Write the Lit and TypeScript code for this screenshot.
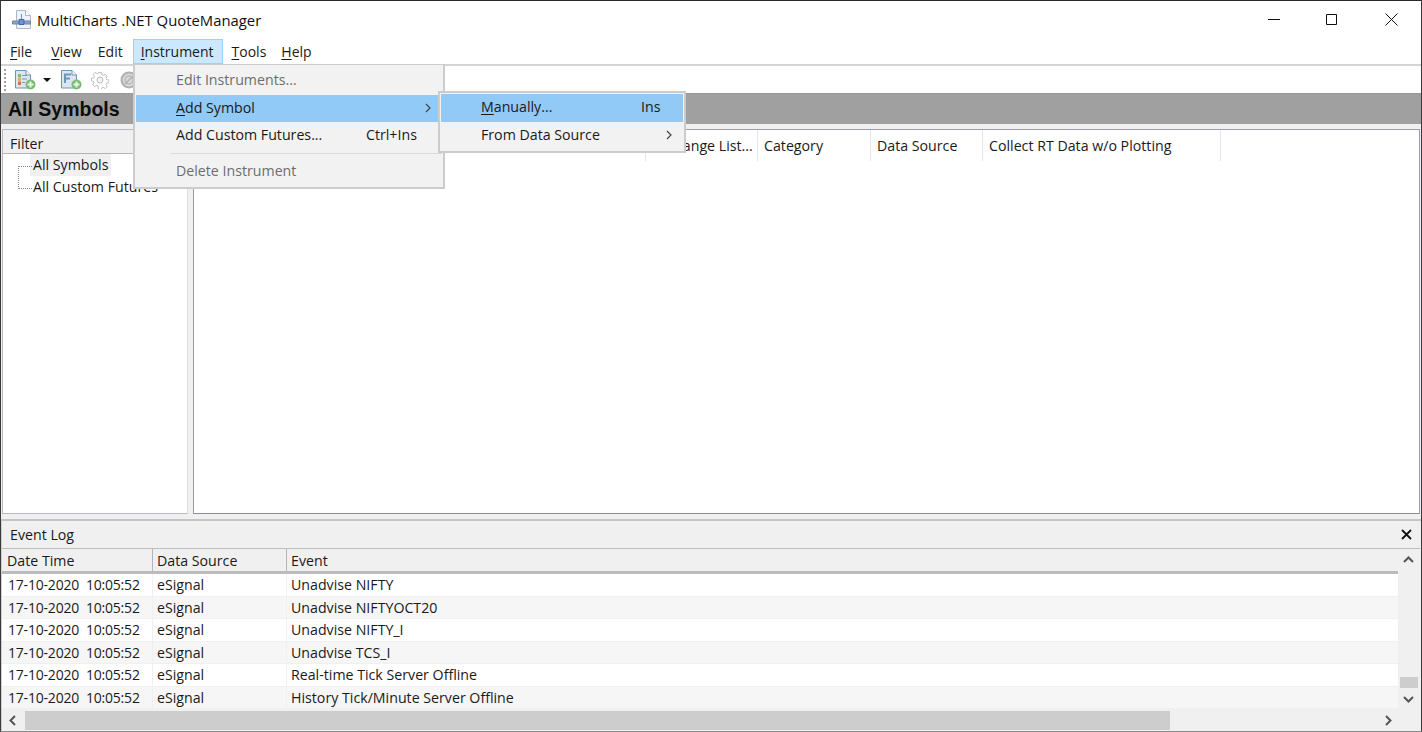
import { LitElement, html, css, svg } from "lit";
import { customElement } from "lit/decorators.js";

const rows = [
  "Unadvise NIFTY",
  "Unadvise NIFTYOCT20",
  "Unadvise NIFTY_I",
  "Unadvise TCS_I",
  "Real-time Tick Server Offline",
  "History Tick/Minute Server Offline",
];

const docIcon = (kind: string) => svg`<svg class="doc" viewBox="0 0 21 20">
  <path d="M.5.500h10.500l4.500 4.500v13H.5z" fill="#dce6f2" stroke="#6f93b8"/>
  <path d="M11 .5v4.500h4.500" fill="#f7fafd" stroke="#6f93b8"/>
  ${kind === "a"
    ? svg`<path d="M3 4h3v3.500H3z" fill="#8fb47a"/><path d="M3 8h3v3H3z" fill="#d8b25c"/><path d="M3 11.500h3V15H3z" fill="#c9735c"/><path d="M7 5.500h5M7 9h5M7 12.500h3" stroke="#7d95ae"/>`
    : svg`<path d="M4 13V4.500h6M4 8.500h5" fill="none" stroke="#6f93b8" stroke-width="2"/>`}
  <circle cx="15.500" cy="14.500" r="5" fill="#79bb72"/>
  <path d="M15.500 11.500v6M12.500 14.500h6" stroke="#eaf7e6" stroke-width="2"/>
</svg>`;

@customElement("app-root")
export class AppRoot extends LitElement {
  static styles = css`
    :host { display: block; width: 1422px; height: 732px; overflow: hidden; }
    * { box-sizing: border-box; }
    .win { position: relative; width: 1422px; height: 732px; background: #fff; display: flex; flex-direction: column;
      border-top: 1px solid #2a2a2a; border-left: 1px solid #3a3a3a; border-right: 1px solid #3a3a3a; border-bottom: 1px solid #8a8a8a;
      font-family: "Open Sans", "Noto Sans", sans-serif; font-size: 14.2px; color: #1a1a1a; overflow: hidden; }
    u { text-underline-offset: 2px; text-decoration-thickness: 1px; }

    .title { height: 38px; flex: none; display: flex; align-items: center; padding: 0 0 0 11px; background: #fff; }
    .title-icon { width: 20px; height: 20px; margin-right: 5px; flex: none; }
    .title-text { font-size: 14.85px; color: #111; flex: 1; }
    .caps { display: flex; margin-top: -2px; }
    .cap { width: 58.5px; height: 38px; display: flex; align-items: center; justify-content: center; }
    .cap.max { padding-right: 3px; }

    .menubar { height: 25px; flex: none; display: flex; align-items: stretch; background: #fff; font-size: 14px; }
    .mi { padding: 0 9px 0 8px; display: flex; align-items: center; border: 1px solid transparent; height: 25px; }
    .mi.hot { background: #cce8ff; border-color: #99d1ff; padding: 0 8px 0 7px; }
    .mi.edit { margin-left: -3px; }
    .mi.help { margin-left: -4px; }

    .toolbar { height: 29px; flex: none; border-top: 2px solid #d4d4d4; display: flex; align-items: center; padding-left: 3px; background: #fff; }
    .grip { width: 3px; height: 22px; margin-right: 8px; border-left: 2px dotted #a0a0a0; }
    .doc { width: 21px; height: 20px; flex: none; margin-top: 1px; }
    .drop { width: 0; height: 0; border-left: 4px solid transparent; border-right: 4px solid transparent; border-top: 4px solid #111; margin: 0 10px 0 7px; }
    .gear { width: 18px; height: 18px; margin-left: 9px; flex: none; }
    .ban { width: 18px; height: 18px; margin-left: 11px; flex: none; }

    .head { height: 31px; flex: none; background: #a0a0a0; border-top: 1px solid #969696; padding: 1px 0 0 7px; font: bold 19.5px "Liberation Sans", Arial, sans-serif; color: #0c0c0c; display: flex; align-items: center; }

    .body { flex: 1; min-height: 0; display: flex; flex-direction: column; background: #f0f0f0; padding-top: 5px; }
    .top { height: 385px; flex: none; display: flex; gap: 5px; padding: 0 1px; }
    .side { width: 186px; flex: none; background: #fff; border: 1px solid #b8b8c0; border-right-color: #ddd; }
    .side-h { height: 24px; background: #f0f0f0; border-bottom: 1px solid #b4b4b4; padding: 3px 0 0 7px; display: flex; align-items: center; }
    .tree { position: relative; padding: 0 0 0 30px; }
    .node { display: flex; align-items: center; height: 22px; }
    .node span { line-height: 22px; }
    .node.sel span { background: #f0f0f0; padding: 0 3px; margin-left: -3px; }
    .tree-lines { position: absolute; left: 15px; top: 12px; width: 14px; height: 23px; border-left: 1px dotted #888; border-bottom: 1px dotted #888; border-top: 1px dotted #888; }

    .list { flex: 1; background: #fff; border: 1px solid #9c9ca8; border-bottom-color: #8d8d99; }
    .list-h { display: flex; height: 31px; }
    .col { border-right: 1px solid #e5e5e5; padding: 0 0 0 6px; display: flex; align-items: center; white-space: nowrap; overflow: hidden; }

    .log { flex: 1; margin-top: 5px; min-height: 0; border-top: 2px solid #c4c4c4; border-left: 1px solid #cfcfcf; background: #f0f0f0; display: flex; flex-direction: column; position: relative; }
    .log-h { height: 28px; flex: none; display: flex; align-items: center; padding: 0 8px; border-bottom: 1px solid #bdbdbd; margin-right: 1px; }
    .log-h .lbl { flex: 1; }
    .log-mid { flex: 1; min-height: 0; display: flex; }
    .grid { flex: 1; min-width: 0; }
    .g-head { height: 25px; display: grid; grid-template-columns: 151px 134px 1fr; border-bottom: 3px solid #bcbcbc; background: #f0f0f0; }
    .g-head div { padding-left: 4px; display: flex; align-items: center; border-right: 1px solid #b4b4b4; }
    .g-head div:first-child { padding-left: 5px; }
    .g-head div:last-child { border-right: 0; }
    .g-row { height: 22.500px; display: grid; grid-template-columns: 151px 134px 1fr; background: #fff; border-bottom: 1px solid #f0f0f0; align-items: center; }
    .g-row:nth-child(odd) { background: #f6f6f6; }
    .g-row div { padding-left: 4px; height: 100%; display: flex; align-items: center; white-space: pre; border-right: 1px solid #f0f0f0; }
    .g-row div:last-child { border-right: 0; }
    .g-row .dt { padding-left: 6px; font-size: 14px; letter-spacing: -0.2px; }
    .vsb { width: 21px; flex: none; background: #f0f0f0; display: flex; flex-direction: column; align-items: center; margin-right: 2px; }
    .vsb .arrow { width: 19px; height: 22px; }
    .vsb .track { flex: 1; width: 19px; display: flex; flex-direction: column; justify-content: flex-end; }
    .vthumb { width: 18px; height: 11px; background: #cdcdcd; margin: 0 auto; }
    .arrow { flex: none; display: flex; align-items: center; justify-content: center; }
    .hsb { height: 21px; flex: none; display: flex; align-items: center; background: #f0f0f0; padding: 0 22px 1px 0; }
    .hsb .arrow { width: 22px; height: 19px; }
    .hthumb { height: 19px; width: 1145px; background: #cdcdcd; flex: none; margin-left: 1px; }
    .hsb .sp { flex: 1; }

    .menu { position: absolute; background: #f2f2f2; border: 2px solid #cccccc; padding: 1px; z-index: 2; }
    .menu.m1 { left: 132px; top: 63px; width: 312px; height: 125px; border-width: 1px 2px 2px 2px; padding-top: 2px; }
    .menu.m2 { left: 437px; top: 90px; width: 248px; height: 62px; }
    .it { display: flex; align-items: center; height: 27.500px; position: relative; padding-bottom: 2px; }
    .it.hot { background: #91c9f7; }
    .it.dis { color: #6d6d6d; }
    .m1 .t, .m2 .t { margin-left: 40px; flex: none; }
    .it .k, .it .a { position: absolute; }
    .m1 .k { left: 230px; }
    .m1 .a { left: 288px; }
    .m2 .k { left: 200px; }
    .m2 .a { left: 224px; }
    .sep { height: 1px; background: #d8d8d8; margin: 3px 0 4px 35px; }
  `;

  render() {
    const chev = svg`<svg width="8" height="10" viewBox="0 0 8 10"><path d="M2 1l4 4-4 4" fill="none" stroke="#444" stroke-width="1.200"/></svg>`;
    return html`<div class="win">
      <div class="title">
        <svg class="title-icon" viewBox="0 0 20 20">
          <path d="M4.500 .5h9l5 5v13h-14z" fill="#eef2f9" stroke="#a9b8d0"/>
          <path d="M13.500 .5v5h5" fill="#fff" stroke="#a9b8d0"/>
          <path d="M9.500 4v6" stroke="#7a8fb3"/>
          <path d="M7 9.500h5v5H7z" fill="#6a95dc" stroke="#41639f"/>
          <path d="M.5 11h6v3h-6zM12.500 11h6v3h-6z" fill="#8ea3c6" stroke="#6c82a8"/>
        </svg>
        <div class="title-text">MultiCharts .NET QuoteManager</div>
        <div class="caps">
          <div class="cap"><svg width="13" height="13" viewBox="0 0 13 13"><path d="M0 6.500h12" stroke="#111"/></svg></div>
          <div class="cap max"><svg width="13" height="13" viewBox="0 0 13 13"><path d="M1.500 1.500h10v10h-10z" fill="none" stroke="#111"/></svg></div>
          <div class="cap"><svg width="13" height="13" viewBox="0 0 13 13"><path d="M.5.500l12 12M12.500.500l-12 12" stroke="#111"/></svg></div>
        </div>
      </div>
      <div class="menubar">
        <div class="mi"><u>F</u>ile</div>
        <div class="mi"><u>V</u>iew</div>
        <div class="mi edit">Edit</div>
        <div class="mi hot"><u>I</u>nstrument</div>
        <div class="mi"><u>T</u>ools</div>
        <div class="mi help"><u>H</u>elp</div>
      </div>
      <div class="toolbar">
        <div class="grip"></div>
        ${docIcon("a")}
        <div class="drop"></div>
        ${docIcon("f")}
        <svg class="gear" viewBox="0 0 18 18"><path d="M7.500 1h3l.5 2.500 1.500.7 2.200-1.300 2 2.100-1.300 2.100.6 1.500 2.500.5v2.800l-2.500.6-.6 1.400 1.300 2.200-2.100 2-2.100-1.300-1.500.6-.5 2.500H7.500L7 15.400l-1.500-.6-2.100 1.300-2.100-2 1.300-2.200-.6-1.400L0 10V7.200l2.500-.5.6-1.500L1.800 3 3.800 1 6 2.300l1.500-.7z" transform="translate(.5 .5) scale(.94)" fill="#fff" stroke="#b9b9b9"/><circle cx="9" cy="9" r="3" fill="#f3f3f3" stroke="#bdbdbd"/></svg>
        <svg class="ban" viewBox="0 0 18 18"><circle cx="9" cy="9" r="7.500" fill="#dadada" stroke="#b0b0b0" stroke-width="2"/><circle cx="9" cy="9" r="4" fill="none" stroke="#b8b8b8" stroke-width="1.500"/><path d="M5 13l8-8" stroke="#b0b0b0" stroke-width="1.500"/></svg>
      </div>
      <div class="head">All Symbols</div>
      <div class="body">
        <div class="top">
          <div class="side">
            <div class="side-h">Filter</div>
            <div class="tree">
              <div class="tree-lines"></div>
              <div class="node sel"><span>All Symbols</span></div>
              <div class="node"><span>All Custom Futures</span></div>
            </div>
          </div>
          <div class="list">
            <div class="list-h">
              <div class="col" style="width:452px"></div>
              <div class="col" style="width:112px">Exchange List...</div>
              <div class="col" style="width:113px">Category</div>
              <div class="col" style="width:112px">Data Source</div>
              <div class="col" style="width:238px">Collect RT Data w/o Plotting</div>
            </div>
          </div>
        </div>
        <div class="log">
          <div class="log-h"><div class="lbl">Event Log</div>
            <svg width="11" height="11" viewBox="0 0 11 11"><path d="M1 1l9 9M10 1l-9 9" stroke="#111" stroke-width="1.800"/></svg></div>
          <div class="log-mid">
            <div class="grid">
              <div class="g-head"><div>Date Time</div><div>Data Source</div><div>Event</div></div>
              ${rows.map((r) => html`<div class="g-row"><div class="dt">17-10-2020  10:05:52</div><div>eSignal</div><div>${r}</div></div>`)}
            </div>
            <div class="vsb">
              <div class="arrow"><svg width="11" height="8" viewBox="0 0 11 8"><path d="M1 6l4.500-4.500L10 6" fill="none" stroke="#555" stroke-width="2"/></svg></div>
              <div class="track"><div class="vthumb"></div></div>
              <div class="arrow"><svg width="11" height="8" viewBox="0 0 11 8"><path d="M1 2l4.500 4.500L10 2" fill="none" stroke="#555" stroke-width="2"/></svg></div>
            </div>
          </div>
          <div class="hsb">
            <div class="arrow"><svg width="8" height="11" viewBox="0 0 8 11"><path d="M6 1L1.500 5.500 6 10" fill="none" stroke="#555" stroke-width="2"/></svg></div>
            <div class="hthumb"></div>
            <div class="sp"></div>
            <div class="arrow"><svg width="8" height="11" viewBox="0 0 8 11"><path d="M2 1l4.500 4.500L2 10" fill="none" stroke="#555" stroke-width="2"/></svg></div>
          </div>
        </div>
      </div>

      <div class="menu m1">
        <div class="it dis"><span class="t">Edit Instruments...</span></div>
        <div class="it hot"><span class="t"><u>A</u>dd Symbol</span><span class="a">${chev}</span></div>
        <div class="it"><span class="t">Add Custom Futures...</span><span class="k">Ctrl+Ins</span></div>
        <div class="sep"></div>
        <div class="it dis"><span class="t">Delete Instrument</span></div>
      </div>
      <div class="menu m2">
        <div class="it hot"><span class="t"><u>M</u>anually...</span><span class="k">Ins</span></div>
        <div class="it"><span class="t">From Data Source</span><span class="a">${chev}</span></div>
      </div>
    </div>`;
  }
}
